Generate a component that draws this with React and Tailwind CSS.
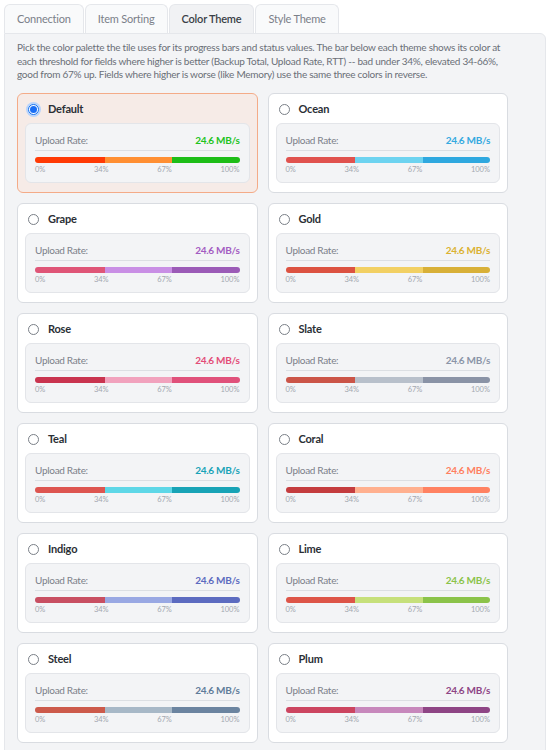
// Settings panel: Color Theme tab with a grid of palette preview cards.
const tabs = ['Connection', 'Item Sorting', 'Color Theme', 'Style Theme']

const themes = [
  { name: 'Default', bad: '#ff3a05', mid: '#ff8f33', good: '#1dbd17', value: '#22c31e' },
  { name: 'Ocean', bad: '#e0524e', mid: '#6dd3f0', good: '#2fa8df', value: '#34a9e0' },
  { name: 'Grape', bad: '#df5577', mid: '#c98fe5', good: '#9b5bb7', value: '#a35cc2' },
  { name: 'Gold', bad: '#dc5241', mid: '#f2d063', good: '#d8b038', value: '#dbb232' },
  { name: 'Rose', bad: '#c9344f', mid: '#f1a2bd', good: '#e0517b', value: '#e34d78' },
  { name: 'Slate', bad: '#cb5548', mid: '#b8c0cb', good: '#8a93a6', value: '#8b94a8' },
  { name: 'Teal', bad: '#dd5550', mid: '#5ed7e7', good: '#18a3b6', value: '#19a3b8' },
  { name: 'Coral', bad: '#c43c3e', mid: '#ffb08f', good: '#ff8262', value: '#ff7f60' },
  { name: 'Indigo', bad: '#c84f62', mid: '#99a8e3', good: '#5c6bc0', value: '#5c6bc0' },
  { name: 'Lime', bad: '#dd5548', mid: '#c6e07b', good: '#8bc34a', value: '#8bc34a' },
  { name: 'Steel', bad: '#cc5a4b', mid: '#a7b8c7', good: '#6b84a0', value: '#5f7c9a' },
  { name: 'Plum', bad: '#cc4560', mid: '#c788bc', good: '#8e4585', value: '#8e4585' },
]

function ThemeCard({ theme, selected }) {
  return (
    <div
      className={
        selected
          ? 'rounded-md border border-[#f4ab88] bg-[#f6ebe7] px-[7px] pt-[8px] pb-[9px]'
          : 'rounded-md border border-[#d9dce1] bg-white px-[7px] pt-[8px] pb-[9px]'
      }
    >
      <div className="flex h-[16px] items-center gap-[9px] pl-[3px]">
        {selected ? (
          <span className="flex h-[11px] w-[11px] items-center justify-center rounded-full border border-[#1a73f0] bg-white ring-2 ring-[#b9d4fb]">
            <span className="h-[7px] w-[7px] rounded-full bg-[#1a6ef5]" />
          </span>
        ) : (
          <span className="h-[11px] w-[11px] rounded-full border border-[#7a7f87] bg-white" />
        )}
        <span className="text-[11px] font-bold tracking-[-0.2px] text-[#2b2f36]">{theme.name}</span>
      </div>
      <div className="mt-[5px] rounded-md border border-[#e3e5e9] bg-[#f3f4f6] px-[9px] pt-[9px] pb-[7px]">
        <div className="flex h-[18px] items-start justify-between border-b border-[#dcdfe3] text-[10px] leading-[14px] tracking-[-0.3px]">
          <span className="text-[#7b8089]">Upload Rate:</span>
          <span className="font-bold" style={{ color: theme.value }}>24.6 MB/s</span>
        </div>
        <div className="mt-[6px] flex h-[6px] overflow-hidden rounded-full">
          <div className="w-[34%]" style={{ background: theme.bad }} />
          <div className="w-[33%]" style={{ background: theme.mid }} />
          <div className="flex-1" style={{ background: theme.good }} />
        </div>
        <div className="mt-[2px] flex h-[10px] justify-between text-[7.5px] leading-[10px] text-[#a3a8b0]">
          <span>0%</span>
          <span>34%</span>
          <span>67%</span>
          <span>100%</span>
        </div>
      </div>
    </div>
  )
}

export default function App() {
  return (
    <div className="min-h-[750px] bg-white pt-[4px] pl-[4px] pr-[4px] font-['Lato',sans-serif]">
      <div className="flex gap-[1px]">
        {tabs.map(t => (
          <div
            key={t}
            className={
              t === 'Color Theme'
                ? 'flex h-[29px] items-center rounded-t-md border border-b-0 border-[#e5e7eb] bg-[#f1f2f4] px-[12px] text-[11px] font-semibold tracking-[-0.2px] text-[#3a3f47]'
                : 'flex h-[29px] items-center rounded-t-md border border-b-0 border-[#e5e7eb] bg-[#f9fafb] px-[12px] text-[11px] tracking-[-0.2px] text-[#7b8089]'
            }
          >
            {t}
          </div>
        ))}
      </div>
      <div className="min-h-[720px] rounded-tr-md border border-[#e5e7eb] bg-[#f3f4f6] px-[12px] pt-[7px]">
        <p className="whitespace-nowrap text-[10px] leading-[13.5px] tracking-[-0.25px] text-[#6a6f77]">
          Pick the color palette the tile uses for its progress bars and status values. The bar below each theme shows its color at
          <br />
          each threshold for fields where higher is better (Backup Total, Upload Rate, RTT) -- bad under 34%, elevated 34-66%,
          <br />
          good from 67% up. Fields where higher is worse (like Memory) use the same three colors in reverse.
        </p>
        <div className="mt-[11px] grid w-[491px] grid-cols-2 gap-[10px]">
          {themes.map((th, i) => (
            <ThemeCard key={th.name} theme={th} selected={i === 0} />
          ))}
        </div>
      </div>
    </div>
  )
}
